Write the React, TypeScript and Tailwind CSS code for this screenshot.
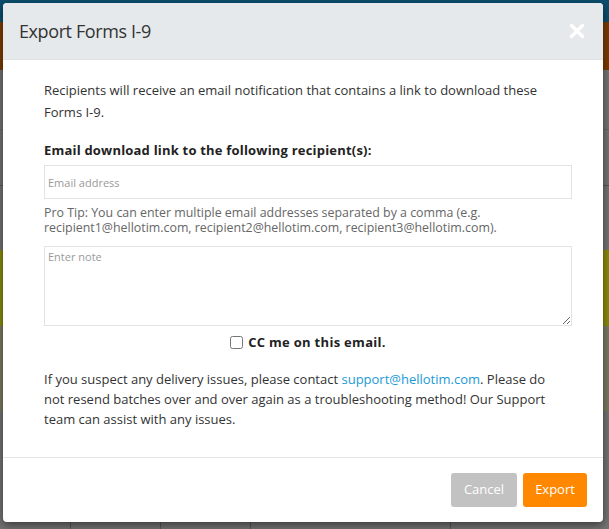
import { useState } from 'react'

export default function App() {
  const [cc, setCc] = useState(false)

  return (
    <div className="relative w-[609px] h-[529px] overflow-hidden bg-[#737373] font-['Open_Sans',sans-serif]">
      {/* dimmed page behind the dialog */}
      <div className="flex flex-col h-full">
        <div className="h-[22px] bg-[#0b4e6c] shrink-0" />
        <div className="h-[48px] bg-[#7a3b02] shrink-0" />
        <div className="h-[60px] border-b border-[#666] shrink-0" />
        <div className="h-[56px] border-b border-[#555] shrink-0" />
        <div className="h-[64px] shrink-0" />
        <div className="h-[76px] bg-[#8a8a0c] shrink-0" />
        <div className="h-[85px] bg-[#7a7a62] shrink-0" />
        <div className="flex-1 flex">
          <div className="w-[71px] border-r border-[#555]" />
          <div className="w-[90px] border-r border-[#555]" />
          <div className="w-[90px] border-r border-[#555]" />
          <div className="w-[200px] border-r border-[#555]" />
          <div className="flex-1" />
        </div>
      </div>

      {/* dialog */}
      <div className="absolute left-[3px] top-[3px] w-[600px] h-[519px] bg-white rounded-[4px] shadow-[0_3px_9px_rgba(0,0,0,0.5)] overflow-hidden flex flex-col">
        <div className="h-[57px] bg-[#e5e9ec] border-b border-[#dfe3e6] flex items-center justify-between pl-[16px] pr-[18px] shrink-0">
          <h2 className="text-[18px] text-[#333] font-normal tracking-[-0.4px]">Export Forms I-9</h2>
          <svg width="16" height="16" viewBox="0 0 16 16" className="text-white">
            <path d="M2.5 2.5 L13.5 13.5 M13.5 2.5 L2.5 13.5" stroke="currentColor" strokeWidth="3.4" strokeLinecap="round" />
          </svg>
        </div>

        <div className="flex-1 pl-[41px] pr-[31px] pt-[19px] text-[13px] text-[#333]">
          <p className="leading-[22px]">
            Recipients will receive an email notification that contains a link to download these Forms I-9.
          </p>

          <p className="mt-[16px] font-bold text-[13px] leading-[22px] text-[#222] tracking-[0.2px]">
            Email download link to the following recipient(s):
          </p>

          <input
            type="text"
            placeholder="Email address"
            className="mt-[4px] w-full h-[34px] border border-[#e3e3e3] px-[3px] text-[11px] placeholder:text-[#9a9a9a] outline-none"
          />

          <p className="mt-[6px] text-[12.4px] leading-[15px] text-[#666]">
            Pro Tip: You can enter multiple email addresses separated by a comma (e.g. recipient1@hellotim.com, recipient2@hellotim.com, recipient3@hellotim.com).
          </p>

          <textarea
            placeholder="Enter note"
            className="mt-[11px] block w-full h-[80px] border border-[#e3e3e3] px-[3px] py-[2px] text-[11px] placeholder:text-[#9a9a9a] outline-none"
          />

          <label className="mt-[7px] flex items-center justify-center gap-[5px] cursor-pointer">
            <input
              type="checkbox"
              checked={cc}
              onChange={() => setCc(c => !c)}
              className="w-[13px] h-[13px] accent-[#666]"
            />
            <span className="font-bold text-[13px] text-[#222] tracking-[0.3px]">CC me on this email.</span>
          </label>

          <p className="mt-[16px] pr-[8px] leading-[20px]">
            If you suspect any delivery issues, please contact{' '}
            <a className="text-[#1c9ad6]">support@hellotim.com</a>. Please do not resend batches over and over again as a troubleshooting method! Our Support team can assist with any issues.
          </p>
        </div>

        <div className="h-[65px] border-t border-[#e5e5e5] flex items-center justify-end gap-[6px] pr-[16px] shrink-0">
          <button className="w-[66px] h-[34px] rounded-[3px] bg-[#c2c2c2] text-white text-[13px]">Cancel</button>
          <button className="w-[64px] h-[34px] rounded-[3px] bg-[#ff8800] text-white text-[13px]">Export</button>
        </div>
      </div>
    </div>
  )
}
